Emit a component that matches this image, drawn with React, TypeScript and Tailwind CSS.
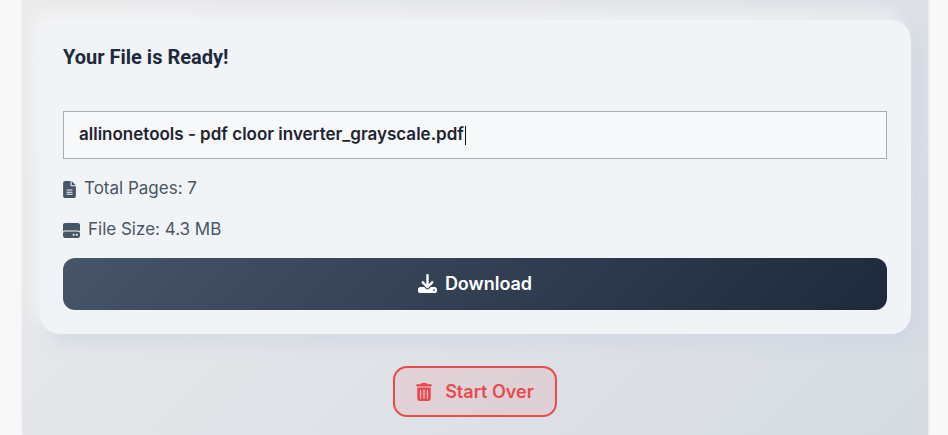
import React from 'react';
import { FaFileLines, FaHardDrive, FaDownload, FaTrashCan } from 'react-icons/fa6';

export default function App() {
  return (
    <div className="h-[435px] overflow-hidden bg-[#f8f8f8] pl-[23px] pr-[20px] font-['Inter',sans-serif]">
      <div className="h-[435px] overflow-hidden bg-[linear-gradient(135deg,#ebebed,#d6dbe3)] pl-[17px] pr-[17px] pt-[20px] shadow-[0_0_3px_rgba(0,0,0,0.15)]">
        {/* Result card */}
        <div className="rounded-[20px] bg-[#f0f4f7] pl-[23px] pr-[24px] pt-[24px] pb-[24px] shadow-[-8px_-8px_16px_rgba(255,255,255,0.5),8px_8px_16px_rgba(203,213,225,0.7)]">
          <h3 className="mb-[41px] font-['Roboto',sans-serif] text-[20px] font-bold leading-[26px] text-[#1e293b]">Your File is Ready!</h3>

          <div className="flex h-[48px] items-center border border-[#a9adb3] bg-[#f6f8fa] px-[15px] text-[17px] font-semibold text-[#1f2530]">
            <span>allinonetools - pdf cloor inverter_grayscale.pdf</span>
            <span className="ml-px h-[19px] w-px bg-[#111]"></span>
          </div>

          <div className="mt-[18px] flex h-[24px] items-center gap-[8px] text-[17px] text-[#4b5563]">
            <FaFileLines size={17} className="w-[13px] text-[#475569]" />
            <span>Total Pages: 7</span>
          </div>
          <div className="mt-[17px] flex h-[24px] items-center gap-[8px] text-[17px] text-[#4b5563]">
            <FaHardDrive size={17} className="text-[#475569]" />
            <span>File Size: 4.3 MB</span>
          </div>

          <button className="mt-[16px] flex h-[52px] w-full items-center justify-center gap-[8px] rounded-[12px] bg-[linear-gradient(135deg,#475569,#1e293b)] pb-[2px] text-[18px] font-semibold text-white">
            <FaDownload size={19} />
            <span>Download</span>
          </button>
        </div>

        <div className="mt-[32px] flex justify-center pr-[1px]">
          <button className="flex h-[51px] w-[164px] items-center justify-center gap-[13px] rounded-[14px] border-2 border-[#e94a4c] bg-[#ef4444]/10 text-[18px] font-semibold text-[#e94a4c]">
            <FaTrashCan size={18} className="w-[16px]" />
            <span>Start Over</span>
          </button>
        </div>
      </div>
    </div>
  );
}
